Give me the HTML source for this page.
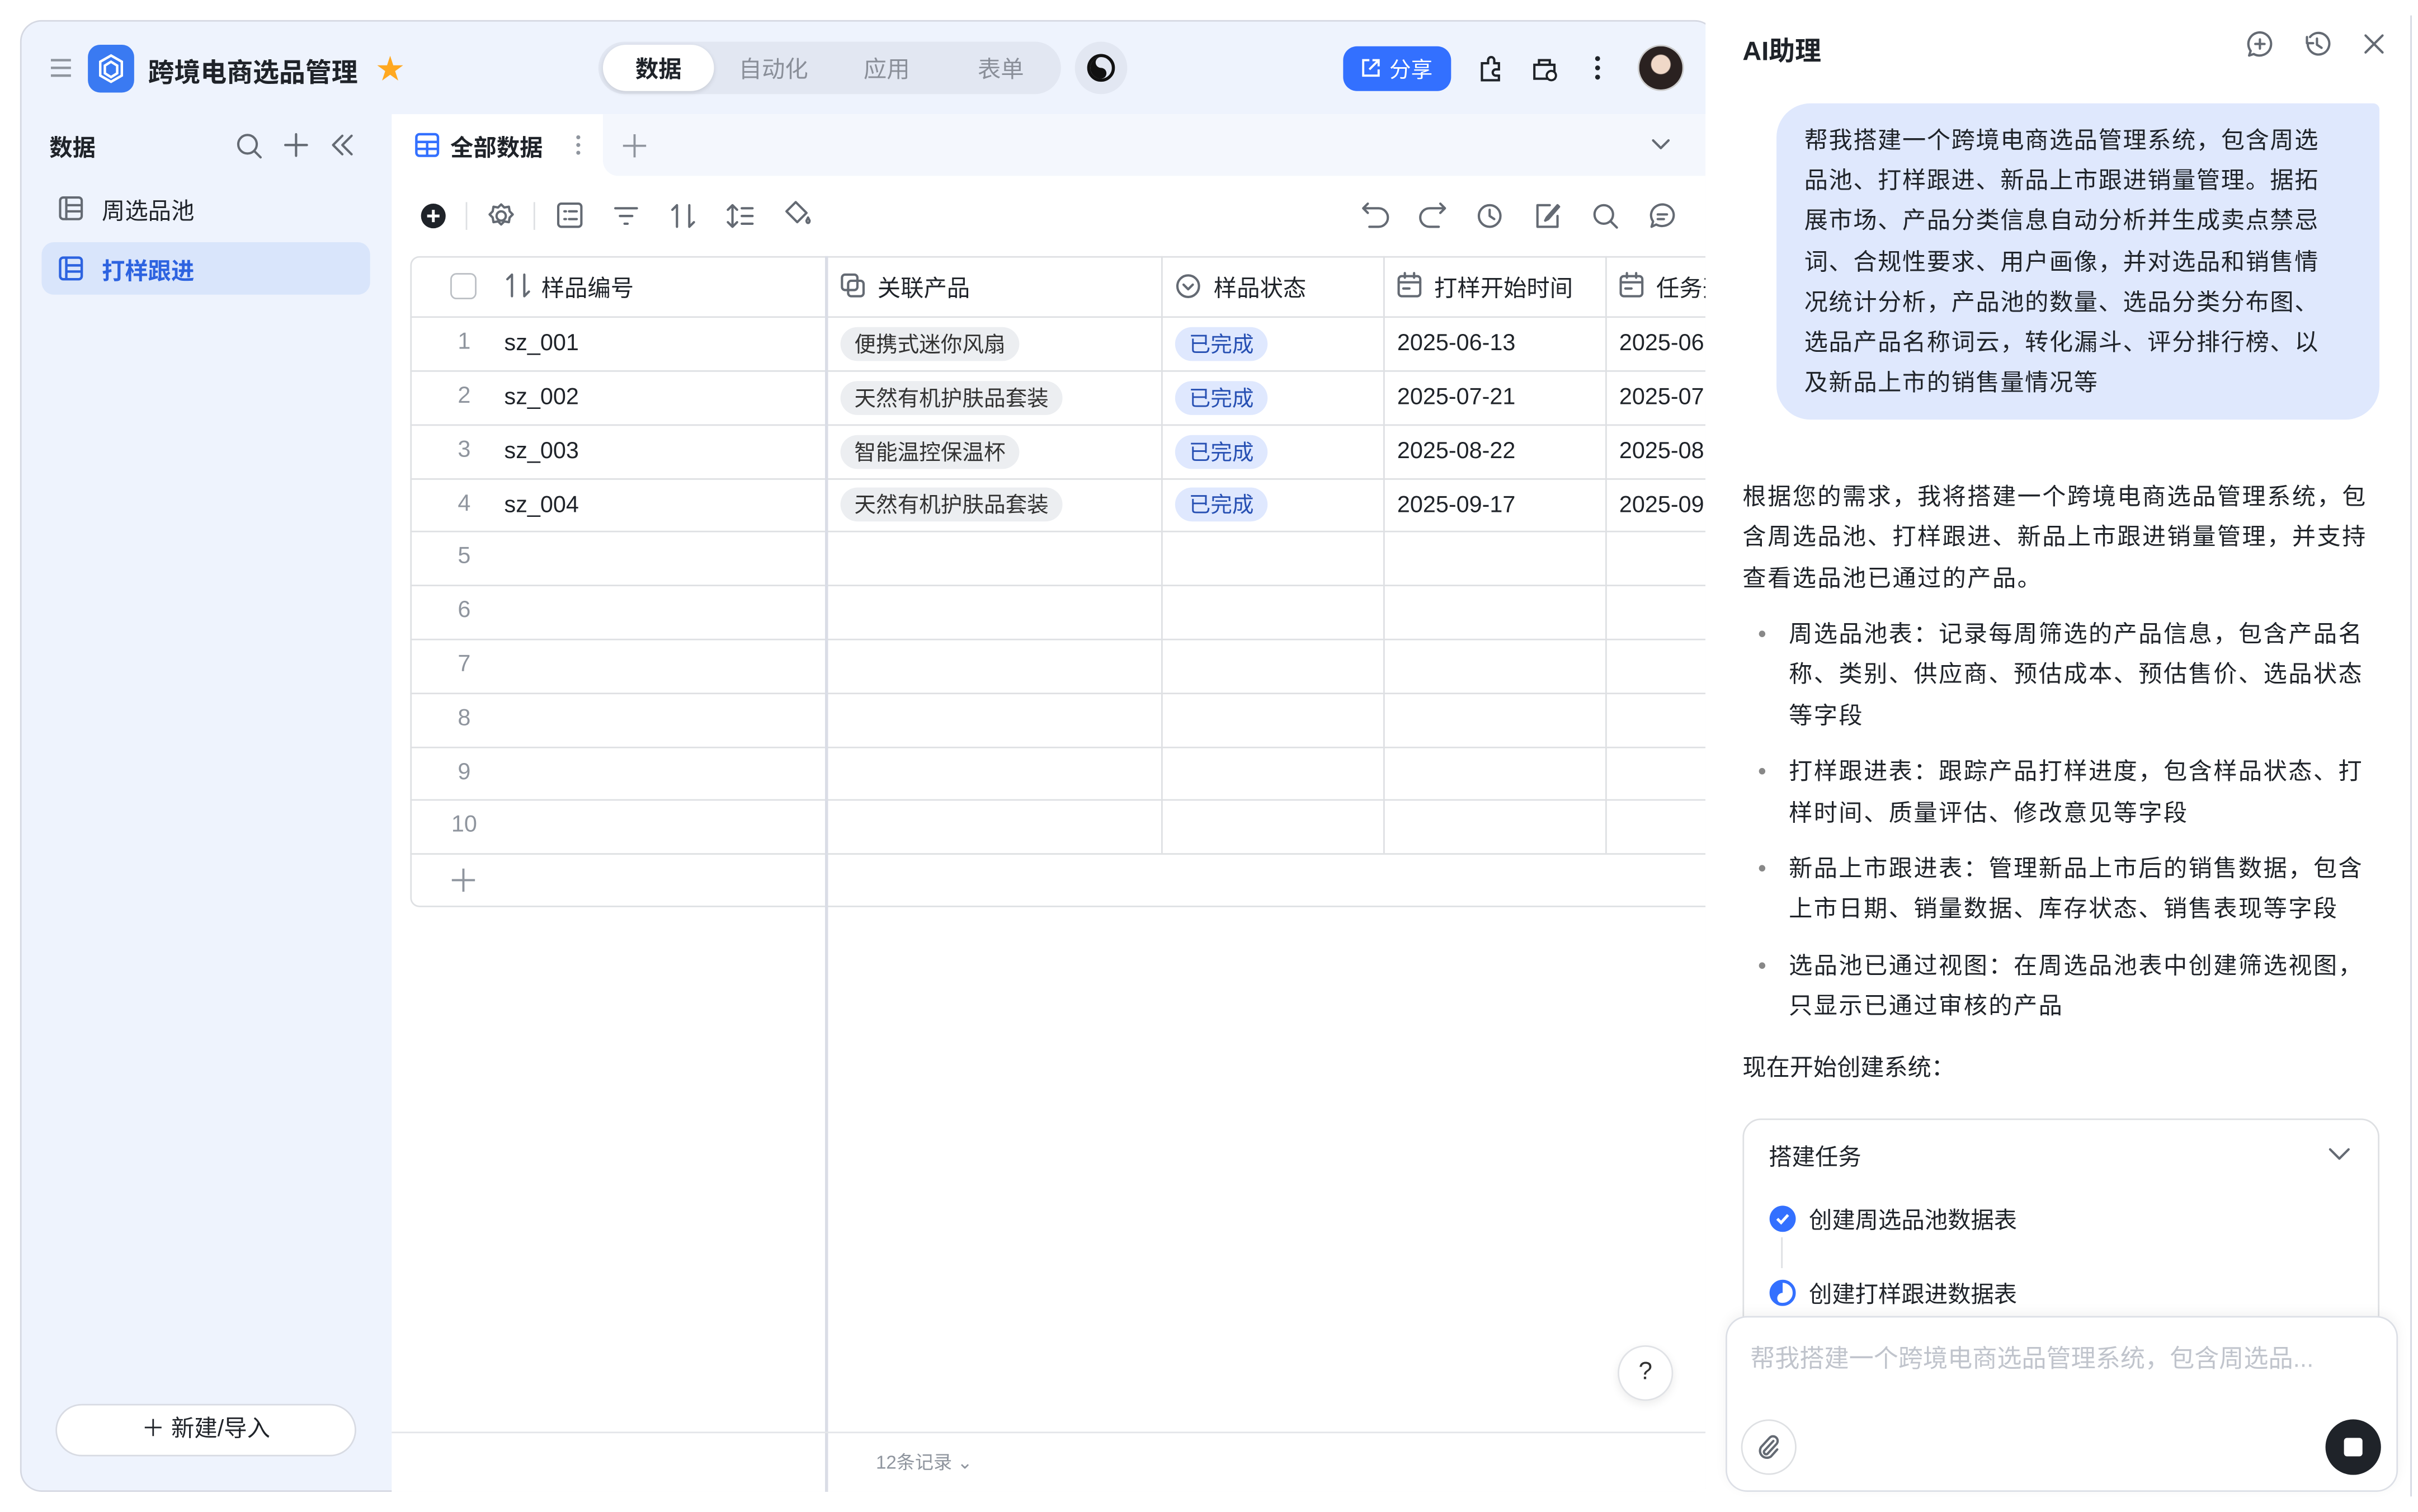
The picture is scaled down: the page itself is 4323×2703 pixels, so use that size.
<!DOCTYPE html>
<html><head><meta charset="utf-8">
<style>
*{box-sizing:border-box;margin:0;padding:0}
html,body{width:4323px;height:2703px;overflow:hidden;background:#fff}
#w{position:absolute;left:0;top:0;width:1568px;height:980px;transform:scale(2.757,2.758);transform-origin:0 0;font-family:"Liberation Sans","Noto Sans CJK SC",sans-serif;color:#1f2329;font-size:15px}
.a{position:absolute}
svg{position:absolute;overflow:visible}
.ic{fill:none;stroke:#646a73;stroke-width:1.5;stroke-linecap:round;stroke-linejoin:round}
.tag{position:absolute;height:22px;line-height:22px;border-radius:11px;padding:0 9px;font-size:14px}
.g{background:#eceef1;color:#333}
.b{background:#dfe8fe;color:#2750b3}
.hl{position:absolute;left:266px;width:840px;height:1px;background:#dee0e3}
.vl{position:absolute;width:1px;background:#dee0e3}
.rn{position:absolute;left:266px;width:70px;text-align:center;color:#8f959e;font-size:15px}
.cell{position:absolute;font-size:15px}
</style></head><body><div id="w">
<div class="a" style="left:13px;top:13px;width:1100px;height:954px;background:#eef3fd;border:1px solid #d5d8e2;border-radius:14px"></div>
<svg style="left:33px;top:38px" width="14" height="12"><path d="M0 1h13M0 6h13M0 11h13" stroke="#8f959e" stroke-width="1.6"/></svg>
<div class="a" style="left:57px;top:29px;width:30px;height:31px;background:#3a7af2;border-radius:8px"></div>
<svg style="left:62px;top:34px" width="20" height="21"><path d="M10 2l7 4v9l-7 4-7-4V6z M10 6l4 2.5v5L10 16l-4-2.5v-5z" fill="none" stroke="#fff" stroke-width="1.6"/></svg>
<div class="a" style="left:96px;top:33px;font-size:17px;font-weight:bold">跨境电商选品管理</div>
<div class="a" style="left:244px;top:31px;font-size:18px;color:#ffa820">★</div>
<div class="a" style="left:388px;top:27px;width:300px;height:34px;background:#e2e7f2;border-radius:17px"></div>
<div class="a" style="left:391px;top:29px;width:72px;height:30px;background:#fff;border-radius:15px;box-shadow:0 1px 3px rgba(0,0,0,.12)"></div>
<div class="a" style="left:412px;top:34px;font-weight:bold">数据</div>
<div class="a" style="left:479px;top:34px;color:#8a8f99">自动化</div>
<div class="a" style="left:560px;top:34px;color:#8a8f99">应用</div>
<div class="a" style="left:634px;top:34px;color:#8a8f99">表单</div>
<div class="a" style="left:697px;top:27px;width:34px;height:34px;background:#e2e7f2;border-radius:17px"></div>
<svg style="left:704px;top:34px" width="20" height="20"><circle cx="10" cy="10" r="8" fill="none" stroke="#111" stroke-width="2"/><path d="M10 3a7 7 0 0 0 0 14a3.5 3.5 0 0 0 0-7a3.5 3.5 0 0 1 0-7z" fill="#111"/></svg>
<div class="a" style="left:871px;top:30px;width:70px;height:29px;background:#3370ff;border-radius:9px"></div>
<svg style="left:882px;top:37px" width="14" height="14"><path d="M6 2H2v10h10V8M8 2h4v4M12 2L6 8" fill="none" stroke="#fff" stroke-width="1.4"/></svg>
<div class="a" style="left:901px;top:35px;color:#fff;font-size:14px">分享</div>
<svg style="left:958px;top:36px" width="17" height="17"><path d="M3 5h4V3a2 2 0 0 1 4 0v2h3v4h-2a2 2 0 0 0 0 4h2v3H3z" fill="none" stroke="#1f2329" stroke-width="1.5"/></svg>
<svg style="left:993px;top:36px" width="17" height="17"><path d="M2 6h13v9H2zM5 6V3h7v3" fill="none" stroke="#1f2329" stroke-width="1.5"/><circle cx="13" cy="13" r="3" fill="#fff" stroke="#1f2329" stroke-width="1.4"/></svg>
<svg style="left:1034px;top:36px" width="4" height="16"><circle cx="2" cy="2" r="1.6" fill="#1f2329"/><circle cx="2" cy="8" r="1.6" fill="#1f2329"/><circle cx="2" cy="14" r="1.6" fill="#1f2329"/></svg>
<div class="a" style="left:1062px;top:29px;width:30px;height:30px;border-radius:15px;background:radial-gradient(circle at 50% 42%,#f0d8c8 0 28%,#2a2120 31%);border:1px solid #ccc"></div>
<div class="a" style="left:32px;top:85px;font-weight:bold">数据</div>
<svg style="left:153px;top:86px" width="18" height="18"><circle cx="7.5" cy="7.5" r="6" class="ic"/><path d="M12 12l4 4" class="ic"/></svg>
<svg style="left:184px;top:86px" width="16" height="16"><path d="M8 1v14M1 8h14" class="ic"/></svg>
<svg style="left:214px;top:87px" width="16" height="14"><path d="M8 1L2 7l6 6M14 1L8 7l6 6" class="ic"/></svg>
<svg style="left:38px;top:127px" width="16" height="16"><rect x="1" y="1" width="14" height="14" rx="2" class="ic"/><path d="M5 1v14M5 6h10M5 10h10" class="ic"/></svg>
<div class="a" style="left:66px;top:126px">周选品池</div>
<div class="a" style="left:27px;top:157px;width:213px;height:34px;background:#d9e5fb;border-radius:8px"></div>
<svg style="left:38px;top:166px" width="16" height="16"><rect x="1" y="1" width="14" height="14" rx="2" fill="none" stroke="#2d63e0" stroke-width="1.6"/><path d="M5 1v14M5 6h10M5 10h10" stroke="#2d63e0" stroke-width="1.6"/></svg>
<div class="a" style="left:66px;top:165px;color:#2d63e0;font-weight:bold">打样跟进</div>
<div class="a" style="left:36px;top:910px;width:195px;height:34px;background:#fff;border:1px solid #d8dbe3;border-radius:17px;text-align:center;line-height:32px">＋ 新建/导入</div>
<div class="a" style="left:254px;top:74px;width:852px;height:893px;background:#fff"></div>
<div class="a" style="left:391px;top:74px;width:715px;height:40px;background:#f4f7fd;border-bottom-left-radius:10px"></div>
<svg style="left:269px;top:86px" width="16" height="16"><rect x="1" y="1" width="14" height="14" rx="2" fill="none" stroke="#3370ff" stroke-width="1.6"/><path d="M1 6h14M1 10.5h14M8 6v9" stroke="#3370ff" stroke-width="1.6"/></svg>
<div class="a" style="left:292px;top:85px;font-weight:bold">全部数据</div>
<svg style="left:373px;top:87px" width="4" height="14"><circle cx="2" cy="2" r="1.3" fill="#8f959e"/><circle cx="2" cy="7" r="1.3" fill="#8f959e"/><circle cx="2" cy="12" r="1.3" fill="#8f959e"/></svg>
<svg style="left:404px;top:87px" width="15" height="15"><path d="M7.5 0v15M0 7.5h15" stroke="#8f959e" stroke-width="1.4"/></svg>
<svg style="left:1071px;top:90px" width="12" height="8"><path d="M1 1l5 5 5-5" class="ic"/></svg>
<svg style="left:272px;top:131px" width="18" height="18"><circle cx="9" cy="9" r="8" fill="#1f2329"/><path d="M9 5v8M5 9h8" stroke="#fff" stroke-width="1.8"/></svg>
<div class="vl" style="left:302px;top:131px;height:18px"></div>
<svg style="left:316px;top:131px" width="18" height="18"><circle cx="9" cy="9" r="3" class="ic"/><path d="M9 1.5l2 2 3-.5.5 3 2 2-2 2-.5 3-3-.5-2 2-2-2-3 .5-.5-3-2-2 2-2 .5-3 3 .5z" class="ic"/></svg>
<div class="vl" style="left:346px;top:131px;height:18px"></div>
<svg style="left:361px;top:131px" width="17" height="17"><rect x="1" y="1" width="15" height="15" rx="2" class="ic"/><path d="M5 6h1M8 6h5M5 11h1M8 11h5" class="ic"/></svg>
<svg style="left:398px;top:133px" width="16" height="14"><path d="M1 2h14M4 7h8M7 12h2" class="ic"/></svg>
<svg style="left:434px;top:131px" width="18" height="18"><path d="M5 16V2L2 5M13 2v14l3-3" class="ic"/></svg>
<svg style="left:471px;top:131px" width="18" height="18"><path d="M4 2v14M1 5l3-3 3 3M1 13l3 3 3-3M10 4h7M10 9h7M10 14h7" class="ic"/></svg>
<svg style="left:508px;top:130px" width="18" height="19"><path d="M8 1l7 7-6 6-7-7z M15 13c0 2 2 2 2 0l-1-2z" class="ic"/></svg>
<svg style="left:883px;top:131px" width="18" height="17"><path d="M4 1L1 4l3 3M1 4h10a6 6 0 0 1 0 12H5" class="ic"/></svg>
<svg style="left:920px;top:131px" width="18" height="17"><path d="M14 1l3 3-3 3M17 4H7a6 6 0 0 0 0 12h6" class="ic"/></svg>
<svg style="left:957px;top:131px" width="18" height="18"><circle cx="9" cy="9" r="7" class="ic"/><path d="M9 5v4l3 2" class="ic"/></svg>
<svg style="left:995px;top:131px" width="18" height="18"><path d="M15 9v7H2V2h8M8 10l7-8 1 1-7 8-2 1z" class="ic"/></svg>
<svg style="left:1032px;top:131px" width="18" height="18"><circle cx="8" cy="8" r="6" class="ic"/><path d="M12.5 12.5l4 4" class="ic"/></svg>
<svg style="left:1069px;top:131px" width="18" height="18"><path d="M9 1.5a7.5 7 0 1 1-4 13l-3 1.5 1-3.5A7.5 7 0 0 1 9 1.5zM6 8h6M6 11h4" class="ic"/></svg>
<div class="a" style="left:266px;top:166px;width:850px;height:422px;border:1px solid #dee0e3;border-radius:6px 0 0 6px"></div>
<div class="hl" style="top:205px"></div>
<div class="hl" style="top:240px"></div><div class="hl" style="top:275px"></div><div class="hl" style="top:310px"></div>
<div class="hl" style="top:344px"></div><div class="hl" style="top:379px"></div><div class="hl" style="top:414px"></div>
<div class="hl" style="top:449px"></div><div class="hl" style="top:484px"></div><div class="hl" style="top:518px"></div>
<div class="hl" style="top:553px"></div>
<div class="vl" style="left:535px;top:166px;height:801px;width:2px;background:#dadde6"></div>
<div class="vl" style="left:753px;top:166px;height:387px"></div>
<div class="vl" style="left:897px;top:166px;height:387px"></div>
<div class="vl" style="left:1041px;top:166px;height:387px"></div>
<div class="a" style="left:1106px;top:74px;width:10px;height:893px;background:#fff"></div>
<div class="a" style="left:292px;top:177px;width:17px;height:17px;border:1.5px solid #bbbfc4;border-radius:4px"></div>
<svg style="left:328px;top:177px" width="16" height="16"><path d="M4 1v14M1 4l3-3M12 1v14l3-3" class="ic"/></svg>
<div class="cell" style="left:351px;top:176px">样品编号</div>
<svg style="left:545px;top:177px" width="16" height="16"><rect x="1" y="1" width="10" height="10" rx="2" class="ic"/><rect x="5" y="5" width="10" height="10" rx="2" class="ic"/></svg>
<div class="cell" style="left:569px;top:176px">关联产品</div>
<svg style="left:762px;top:177px" width="17" height="17"><circle cx="8.5" cy="8.5" r="7" class="ic"/><path d="M5.5 7.5l3 3 3-3" class="ic"/></svg>
<div class="cell" style="left:787px;top:176px">样品状态</div>
<svg style="left:906px;top:177px" width="16" height="16"><rect x="1" y="2" width="14" height="13" rx="2" class="ic"/><path d="M1 6h14M5 0v3M11 0v3M4 10h4" class="ic"/></svg>
<div class="cell" style="left:930px;top:176px">打样开始时间</div>
<svg style="left:1050px;top:177px" width="16" height="16"><rect x="1" y="2" width="14" height="13" rx="2" class="ic"/><path d="M1 6h14M5 0v3M11 0v3M4 10h4" class="ic"/></svg>
<div class="cell" style="left:1074px;top:176px;width:32px;overflow:hidden;white-space:nowrap">任务开始</div>
<div class="rn" style="top:213px">1</div><div class="rn" style="top:248px">2</div><div class="rn" style="top:283px">3</div><div class="rn" style="top:318px">4</div>
<div class="rn" style="top:352px">5</div><div class="rn" style="top:387px">6</div><div class="rn" style="top:422px">7</div><div class="rn" style="top:457px">8</div><div class="rn" style="top:492px">9</div><div class="rn" style="top:526px">10</div>
<svg style="left:293px;top:563px" width="15" height="15"><path d="M7.5 0v15M0 7.5h15" stroke="#8f959e" stroke-width="1.4"/></svg>
<div class="cell" style="left:327px;top:214px">sz_001</div>
<div class="cell" style="left:327px;top:249px">sz_002</div>
<div class="cell" style="left:327px;top:284px">sz_003</div>
<div class="cell" style="left:327px;top:319px">sz_004</div>
<div class="tag g" style="left:545px;top:212px">便携式迷你风扇</div>
<div class="tag g" style="left:545px;top:247px">天然有机护肤品套装</div>
<div class="tag g" style="left:545px;top:282px">智能温控保温杯</div>
<div class="tag g" style="left:545px;top:316px">天然有机护肤品套装</div>
<div class="tag b" style="left:762px;top:212px">已完成</div>
<div class="tag b" style="left:762px;top:247px">已完成</div>
<div class="tag b" style="left:762px;top:282px">已完成</div>
<div class="tag b" style="left:762px;top:316px">已完成</div>
<div class="cell" style="left:906px;top:214px">2025-06-13</div>
<div class="cell" style="left:906px;top:249px">2025-07-21</div>
<div class="cell" style="left:906px;top:284px">2025-08-22</div>
<div class="cell" style="left:906px;top:319px">2025-09-17</div>
<div class="cell" style="left:1050px;top:214px;width:56px;overflow:hidden">2025-06</div>
<div class="cell" style="left:1050px;top:249px;width:56px;overflow:hidden">2025-07</div>
<div class="cell" style="left:1050px;top:284px;width:56px;overflow:hidden">2025-08</div>
<div class="cell" style="left:1050px;top:319px;width:56px;overflow:hidden">2025-09</div>
<div class="a" style="left:254px;top:928px;width:852px;height:1px;background:#e3e5e9"></div>
<div class="a" style="left:568px;top:939px;font-size:12px;color:#8f959e">12条记录 ⌄</div>
<div class="a" style="left:1049px;top:872px;width:36px;height:36px;border-radius:18px;background:#fff;border:1px solid #e0e2e6;box-shadow:0 2px 6px rgba(0,0,0,.08);text-align:center;line-height:34px;font-size:16px;color:#333">?</div>
<div class="a" style="left:1106px;top:0;width:462px;height:980px;background:#fff"></div>
<div class="a" style="left:1130px;top:19px;font-size:17px;font-weight:bold">AI助理</div>
<svg style="left:1457px;top:20px" width="17" height="17"><path d="M8.5 1a7.5 7.5 0 1 1-4 14l-3 1 1-3A7.5 7.5 0 0 1 8.5 1zM8.5 5.5v6M5.5 8.5h6" class="ic"/></svg>
<svg style="left:1494px;top:20px" width="17" height="17"><path d="M2 4v4h4M2.5 8A7 7 0 1 0 4 4M8.5 5v4l3 2" class="ic"/></svg>
<svg style="left:1533px;top:22px" width="13" height="13"><path d="M1 1l11 11M12 1L1 12" class="ic"/></svg>
<div class="a" style="left:1152px;top:67px;width:391px;height:205px;background:#dfe8fd;border-radius:22px 4px 22px 22px;padding:12px 26px 11px 18px;line-height:26.2px;font-size:15.3px;letter-spacing:0.6px">帮我搭建一个跨境电商选品管理系统，包含周选品池、打样跟进、新品上市跟进销量管理。据拓展市场、产品分类信息自动分析并生成卖点禁忌词、合规性要求、用户画像，并对选品和销售情况统计分析，产品池的数量、选品分类分布图、选品产品名称词云，转化漏斗、评分排行榜、以及新品上市的销售量情况等</div>
<div class="a" style="left:1130px;top:310px;width:414px;line-height:26.4px;font-size:15.3px;letter-spacing:0.9px">根据您的需求，我将搭建一个跨境电商选品管理系统，包含周选品池、打样跟进、新品上市跟进销量管理，并支持查看选品池已通过的产品。</div>
<div class="a" style="left:1130px;top:399px;width:414px;line-height:26.4px;font-size:15.3px;letter-spacing:0.9px">
<div style="position:relative;padding-left:30px;margin-bottom:10px"><span style="position:absolute;left:10px;color:#888">•</span>周选品池表：记录每周筛选的产品信息，包含产品名称、类别、供应商、预估成本、预估售价、选品状态等字段</div>
<div style="position:relative;padding-left:30px;margin-bottom:10px"><span style="position:absolute;left:10px;color:#888">•</span>打样跟进表：跟踪产品打样进度，包含样品状态、打样时间、质量评估、修改意见等字段</div>
<div style="position:relative;padding-left:30px;margin-bottom:10px"><span style="position:absolute;left:10px;color:#888">•</span>新品上市跟进表：管理新品上市后的销售数据，包含上市日期、销量数据、库存状态、销售表现等字段</div>
<div style="position:relative;padding-left:30px;margin-bottom:10px"><span style="position:absolute;left:10px;color:#888">•</span>选品池已通过视图：在周选品池表中创建筛选视图，只显示已通过审核的产品</div>
</div>
<div class="a" style="left:1130px;top:680px;font-size:15.3px">现在开始创建系统：</div>
<div class="a" style="left:1130px;top:725px;width:413px;height:150px;border:1px solid #dee0e3;border-radius:12px"></div>
<div class="a" style="left:1147px;top:739px;font-size:15px">搭建任务</div>
<svg style="left:1510px;top:744px" width="14" height="9"><path d="M1 1l6 6 6-6" class="ic" stroke="#8f959e"/></svg>
<svg style="left:1147px;top:781px" width="18" height="18"><circle cx="9" cy="9" r="8.5" fill="#3370ff"/><path d="M5.5 9l2.5 2.5 4.5-5" fill="none" stroke="#fff" stroke-width="1.8"/></svg>
<div class="a" style="left:1173px;top:780px;font-size:15px">创建周选品池数据表</div>
<div class="a" style="left:1155px;top:802px;width:1px;height:20px;background:#dee0e3"></div>
<svg style="left:1147px;top:829px" width="18" height="18"><circle cx="9" cy="9" r="7.5" fill="none" stroke="#3370ff" stroke-width="2"/><path d="M9 2a7 7 0 0 0 0 14a3 3 0 0 1 0-7z" fill="#3370ff"/></svg>
<div class="a" style="left:1173px;top:828px;font-size:15px">创建打样跟进数据表</div>
<div class="a" style="left:1119px;top:853px;width:436px;height:114px;background:#fff;border:1px solid #dcdfe6;border-radius:14px;box-shadow:0 -2px 8px rgba(0,0,0,.05)"></div>
<div class="a" style="left:1135px;top:867px;font-size:16px;color:#c0c4cc">帮我搭建一个跨境电商选品管理系统，包含周选品...</div>
<div class="a" style="left:1129px;top:920px;width:36px;height:36px;border:1px solid #dee0e3;border-radius:18px"></div>
<svg style="left:1139px;top:929px" width="16" height="18"><path d="M11 5l-6 6.5a1.5 1.5 0 0 0 2 2L13 7a3 3 0 0 0-4.5-4L3 9a4.5 4.5 0 0 0 6.5 6l4-4.5" class="ic"/></svg>
<div class="a" style="left:1508px;top:920px;width:36px;height:36px;border-radius:18px;background:#1f2329"></div>
<div class="a" style="left:1520px;top:932px;width:12px;height:12px;border-radius:2px;background:#fff"></div>
<div class="a" style="left:1563px;top:10px;width:1px;height:960px;background:#d5d8e2"></div>
</div></body></html>
